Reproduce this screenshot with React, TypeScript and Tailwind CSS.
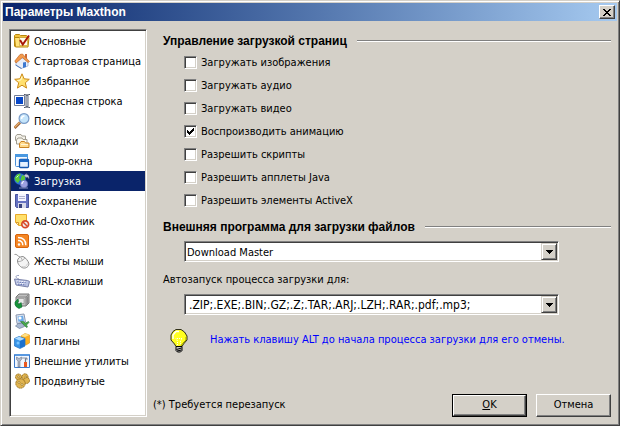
import { useState } from "react";
import type { ReactNode } from "react";

const Icon = ({ children }: { children: ReactNode }) => (
  <svg viewBox="0 0 16 16" className="h-4 w-4 shrink-0" aria-hidden="true">
    {children}
  </svg>
);

const sections: { name: string; icon: ReactNode }[] = [
  {
    name: "Основные",
    icon: (
      <Icon>
        <path d="M.5 13.5v-11l1-1h4l1 1h6l1 1V5" fill="#f3c23c" stroke="#b8860b" />
        <path d="M.5 4.500h14.5l-1 9.500H1.500z" fill="#ffe27a" stroke="#b8860b" />
        <path d="M5.5 4.500h8v8h-8z" fill="#fffbe8" stroke="#c8a030" strokeWidth=".7" />
        <path d="M6 7l2.800 4.500L15 2.500" fill="none" stroke="#a81808" strokeWidth="2" />
      </Icon>
    ),
  },
  {
    name: "Стартовая страница",
    icon: (
      <Icon>
        <path d="M2 8l4-4 8 4v5l-7 2.5L2 12z" fill="#e9eef8" stroke="#8fa5cc" strokeWidth=".7" />
        <path d="M11 1h2v5h-2z" fill="#c86838" />
        <path d="M.8 8L6 1.500 8.500 1 15.500 8.500l-1.500 1L8.500 4.500 2 10z" fill="#f49a4c" stroke="#c06a28" strokeWidth=".7" />
        <path d="M9 9.500l3-.5v5l-3 1z" fill="#3c78d0" />
        <path d="M1.500 12l6 3.500" stroke="#5078b8" />
      </Icon>
    ),
  },
  {
    name: "Избранное",
    icon: (
      <Icon>
        <path d="M8 .8l2.100 5 5.200.5-4 3.500 1.300 5.300L8 12.200l-4.600 2.900 1.300-5.300-4-3.500 5.200-.5z" fill="#ffe070" stroke="#cc8a18" />
        <path d="M8 3.500L6.800 7l-3.300.5" stroke="#fffbd8" fill="none" />
      </Icon>
    ),
  },
  {
    name: "Адресная строка",
    icon: (
      <Icon>
        <path d="M.5 2.500h10v10H.5z" fill="#fff" stroke="#707c98" />
        <path d="M2 4h7v7H2z" fill="#0848c8" />
        <path d="M12 2h2v12h-2z" fill="#dce2ee" stroke="#606878" />
        <path d="M10 1.500h1.500l1.500 1 1.500-1H16M10 14.500h1.500l1.500-1 1.500 1H16" fill="none" stroke="#505868" />
      </Icon>
    ),
  },
  {
    name: "Поиск",
    icon: (
      <Icon>
        <path d="M.5 15L6 9.500" stroke="#9c6030" strokeWidth="2.800" />
        <path d="M.5 14.500l5-5" stroke="#e8b070" strokeWidth="1.200" />
        <circle cx="10" cy="5.500" r="4.900" fill="#c5e5fb" stroke="#7a9cc8" strokeWidth="1.200" />
        <path d="M7.500 6c0-2 1.500-3 3-3" stroke="#fff" strokeWidth="1.500" fill="none" />
      </Icon>
    ),
  },
  {
    name: "Вкладки",
    icon: (
      <Icon>
        <path d="M1.500 7.500v-4l1.500-2h4l1 1.500h3.500v4.500z" fill="#f2f0e8" stroke="#a09c90" />
        <path d="M2.500 11V7l1.500-2h4l1 1.500h4V11z" fill="#faf8ef" stroke="#a09c90" />
        <path d="M5.500 14.500v-4l1.500-2h3.500l1 1.500H15v4.500z" fill="#ffd98a" stroke="#c78224" />
        <path d="M7 11.500h7" stroke="#fff5d8" />
      </Icon>
    ),
  },
  {
    name: "Popup-окна",
    icon: (
      <Icon>
        <rect x="1.500" y="1.500" width="12" height="12" rx="1" fill="#f4f9ff" stroke="#4a90d8" />
        <path d="M1 1h13v3H1z" fill="#4a98e0" />
        <rect x="5.500" y="6.500" width="9" height="8" rx="1" fill="#e4f1ff" stroke="#1458b0" strokeWidth="1.300" />
        <path d="M5.500 6h9v3h-9z" fill="#1c68c4" />
      </Icon>
    ),
  },
  {
    name: "Загрузка",
    icon: (
      <Icon>
        <circle cx="6" cy="6" r="5.800" fill="#2c70d8" />
        <path d="M.5 5L3 1.500 6 .5 7 2 5 4l1 3-2 3-2.500-2zM8 2l3 1v4L8 9 6.500 6.500z" fill="#58c838" />
        <path d="M2.500 4.500l2-2" stroke="#d8ffd0" />
        <circle cx="10" cy="11" r="3.800" fill="#9ca0e0" stroke="#5868b0" strokeWidth=".6" />
        <path d="M8 11c0-1.500 1-2.500 2-2.500" stroke="#f0f2ff" strokeWidth="1.200" fill="none" />
        <path d="M10 2.500L12.500.5v1c2 0 3 1.500 2.500 4.500-.5-1.500-1.500-2-2.500-2v1z" fill="#c8cce0" stroke="#606880" strokeWidth=".4" />
        <path d="M5 15h9" stroke="#8890c0" />
      </Icon>
    ),
  },
  {
    name: "Сохранение",
    icon: (
      <Icon>
        <path d="M1.500 1.500h13v13h-12l-1-1z" fill="#6672c0" stroke="#48549c" />
        <path d="M4 1h8v7H4z" fill="#f4f5ff" />
        <path d="M5 3.500h6M5 5.500h6" stroke="#b0b4d0" />
        <path d="M4 10h8v5H4z" fill="#d8dae8" />
        <path d="M5 11h3v4H5z" fill="#38427c" />
      </Icon>
    ),
  },
  {
    name: "Ad-Охотник",
    icon: (
      <Icon>
        <path d="M1.500 1.500h11v11h-8l-3-3z" fill="#ffe06a" stroke="#e8a828" />
        <path d="M2 9.500h2.500V12" fill="#fff5c0" stroke="#d89828" />
        <circle cx="11.200" cy="11.200" r="3.400" fill="#eee" stroke="#d84828" strokeWidth="1.700" />
        <path d="M9 9l4.500 4.500" stroke="#d84828" strokeWidth="1.500" />
      </Icon>
    ),
  },
  {
    name: "RSS-ленты",
    icon: (
      <Icon>
        <rect x="1.500" y="1.500" width="13" height="13" rx="1.500" fill="#f48624" stroke="#d8640c" />
        <circle cx="5" cy="11.500" r="1.200" fill="#fff" />
        <path d="M4 7.500c3 0 4.800 2 4.800 4.800M4 4.500c5 0 7.800 3 7.800 7.800" fill="none" stroke="#fff" strokeWidth="1.400" />
      </Icon>
    ),
  },
  {
    name: "Жесты мыши",
    icon: (
      <Icon>
        <path d="M.5 1.500C3 .5 3 3 6 4" fill="none" stroke="#999" />
        <path d="M3.500 8c0-3 4-5.500 6.500-4 1.500 1 4.500 4 4.800 6.500.3 3-2.800 5-5.300 4.500-3-.5-6-4-6-7z" fill="#f4f4f4" stroke="#8c8c8c" />
        <path d="M4 8.500c2.500.5 6-1.500 7-4M7 4.500l1.500 3" fill="none" stroke="#a0a0a0" strokeWidth=".8" />
        <path d="M8 13.500c2.500 1 5-.5 5.500-3" stroke="#d0d0d0" fill="none" />
      </Icon>
    ),
  },
  {
    name: "URL-клавиши",
    icon: (
      <Icon>
        <path d="M5 6C1 5 1 2 5 2.500" fill="none" stroke="#98a0c0" />
        <path d="M.5 6l13 1.500 2 1-1.500 5.500L2 12z" fill="#b8c2e4" stroke="#7880a8" />
        <path d="M2.500 8l10 1M3 10l10 1" stroke="#fff" strokeDasharray="1.5 1" />
        <path d="M3 9l10 1M4 11.200l8 .8" stroke="#5060a0" strokeWidth=".8" strokeDasharray="1.5 1" />
      </Icon>
    ),
  },
  {
    name: "Прокси",
    icon: (
      <Icon>
        <path d="M2 4l3-3h10v9l-3 3H2z" fill="#c0c0c0" stroke="#777" />
        <path d="M2 4h10v9M12 4l3-3" fill="none" stroke="#888" />
        <path d="M4 5.500h6v5H4z" fill="#e8e8e8" stroke="#888" strokeWidth=".6" />
        <path d="M12.500 4.500l2-2V10l-2 2z" fill="#888" />
        <path d="M5 15.500L2.500 14 1 11.500V9l3-3 .5 2.500C3 10 3.500 11 5.500 11L7 9.500l1 4.500z" fill="#18943a" stroke="#08682c" strokeWidth=".6" />
      </Icon>
    ),
  },
  {
    name: "Скины",
    icon: (
      <Icon>
        <path d="M2 2l8-1 1.500 8L3 10.500z" fill="#dce4f0" stroke="#8c98b0" />
        <path d="M3.500 3.500l5.500-.7 1 5-5.500 1z" fill="#6cabe8" />
        <circle cx="6" cy="5" r="1.600" fill="#fff" />
        <path d="M1.500 13l3-2.500h4l2 3-5 2z" fill="#a8b8d0" stroke="#6c7c98" strokeWidth=".7" />
        <path d="M6.500 8.500h3l2 1.500 3-1.500.5 1-2.500 2.500 1 2-1 .5L9 11z" fill="#48a848" stroke="#24703c" strokeWidth=".6" />
      </Icon>
    ),
  },
  {
    name: "Плагины",
    icon: (
      <Icon>
        <path d="M7 3l4-2.500L15.500 2v8L12 12 7 9z" fill="#ffb020" stroke="#d89018" strokeWidth=".6" />
        <path d="M7 3l4-2.500L15.500 2 11 4z" fill="#ffe084" />
        <path d="M.5 5.500L5 3.500l6 2V13l-5 2.500L.5 13z" fill="#3894e8" stroke="#2070c0" strokeWidth=".7" />
        <path d="M.8 5.500L5 3.700l5.500 2-4.500 2z" fill="#b0ddff" />
        <path d="M6 8v7l5-2V6z" fill="#1c70cc" />
        <circle cx="4" cy="10" r="1.500" fill="#78c4ff" />
      </Icon>
    ),
  },
  {
    name: "Внешние утилиты",
    icon: (
      <Icon>
        <path d="M.5 1.500h15v13H.5z" fill="#f0f6ff" stroke="#3c78c8" />
        <path d="M1 1h14v2H1z" fill="#5898e0" />
        <path d="M2.500 4v2.500L4 8v6h2V8l1.500-1.500V4L5 5.500z" fill="#b0b8c8" stroke="#606878" strokeWidth=".5" />
        <path d="M8 4.500h5l1 2h-2l-1-1H8z" fill="#8890a0" />
        <path d="M10 9h3v5h-3z" fill="#ec5820" />
        <path d="M11.500 5.500V9" stroke="#707888" strokeWidth="1.200" />
      </Icon>
    ),
  },
  {
    name: "Продвинутые",
    icon: (
      <Icon>
        <g fill="#e0b450" stroke="#98701c" strokeWidth=".9">
          <circle cx="4.500" cy="4" r="3" strokeDasharray="2 .5" />
          <circle cx="11" cy="3.800" r="3" strokeDasharray="2 .5" />
          <circle cx="12.500" cy="7.500" r="3" strokeDasharray="2 .5" />
          <circle cx="6.500" cy="10.500" r="4.700" strokeDasharray="2 .5" />
        </g>
        <g fill="#fff0b8" stroke="#8c6418" strokeWidth=".6">
          <circle cx="4.500" cy="3.800" r=".9" />
          <circle cx="11.800" cy="4" r=".9" />
          <circle cx="5" cy="9.500" r="1" />
          <circle cx="8" cy="11.500" r="1" />
        </g>
      </Icon>
    ),
  },
];

const pageOptions = [
  { label: "Загружать изображения", on: false },
  { label: "Загружать аудио", on: false },
  { label: "Загружать видео", on: false },
  { label: "Воспроизводить анимацию", on: true },
  { label: "Разрешить скрипты", on: false },
  { label: "Разрешить апплеты Java", on: false },
  { label: "Разрешить элементы ActiveX", on: false },
];

const Heading = ({ children }: { children: ReactNode }) => (
  <h2 className="flex h-5 items-center gap-[10px] font-['Liberation_Sans',sans-serif] text-[12px] font-bold">
    {children}
    <span className="h-[2px] flex-1 border-t border-[#808080] bg-white" />
  </h2>
);

const Arrow = () => (
  <svg viewBox="0 0 7 4" className="h-1 w-[7px]" shapeRendering="crispEdges" aria-hidden="true">
    <path d="M0 0h7v1H6v1H5v1H4v1H3V3H2V2H1V1H0z" />
  </svg>
);

const arrowBox =
  "flex w-4 shrink-0 items-center justify-center border border-t-[#d4d0c8] border-l-[#d4d0c8] border-r-[#404040] border-b-[#404040] bg-[#d4d0c8] shadow-[inset_1px_1px_0_#fff,inset_-1px_-1px_0_#808080]";
const sunken =
  "border border-t-[#808080] border-l-[#808080] border-r-white border-b-white bg-white shadow-[inset_1px_1px_0_#404040,inset_-1px_-1px_0_#d4d0c8]";
const raised =
  "border border-t-white border-l-white border-r-[#404040] border-b-[#404040] bg-[#d4d0c8] shadow-[inset_-1px_-1px_0_#808080]";

const App = () => {
  const [selected, setSelected] = useState("Загрузка");
  const [options, setOptions] = useState(pageOptions);
  const [fileTypes, setFileTypes] = useState(
    ".ZIP;.EXE;.BIN;.GZ;.Z;.TAR;.ARJ;.LZH;.RAR;.pdf;.mp3;"
  );

  const toggle = (label: string) =>
    setOptions(options.map((o) => (o.label === label ? { ...o, on: !o.on } : o)));

  return (
    <div className="flex min-h-screen flex-col border border-t-[#d4d0c8] border-l-[#d4d0c8] border-r-[#404040] border-b-[#404040] bg-[#d4d0c8] p-[2px] font-['DejaVu_Sans_Condensed','DejaVu_Sans',sans-serif] text-[11px] text-black shadow-[inset_1px_1px_0_#fff,inset_-1px_-1px_0_#808080]">
      <header className="flex h-[18px] items-center justify-between bg-linear-to-r from-[#0a246a] to-[#a6caf0] px-[2px]">
        <h1 className="font-['Liberation_Sans',sans-serif] text-[12px] font-bold text-white">
          Параметры Maxthon
        </h1>
        <button type="button" aria-label="Закрыть" className={`flex h-[14px] w-4 items-center justify-center ${raised}`}>
          <svg viewBox="0 0 8 7" className="h-[7px] w-2" shapeRendering="crispEdges" aria-hidden="true">
            <path d="M0 0h2v1h1v1h2V1h1V0h2v1H7v1H6v1H5v1h1v1h1v1h1v1H6V6H5V5H3v1H2v1H0V6h1V5h1V4h1V3H2V2H1V1H0z" />
          </svg>
        </button>
      </header>

      <div className="flex flex-1 gap-[6px] px-[6px] pt-2 pb-[6px]">
        <nav className={`w-[138px] shrink-0 p-px ${sunken}`}>
          {sections.map((s) => (
            <button
              key={s.name}
              type="button"
              onClick={() => setSelected(s.name)}
              className={`flex h-5 w-full items-center gap-1 pl-[3px] text-left whitespace-nowrap ${
                s.name === selected ? "bg-[#0a246a] text-white" : ""
              }`}
            >
              {s.icon}
              <span className="pt-[2px]">{s.name}</span>
            </button>
          ))}
        </nav>

        <main className="flex min-w-0 flex-1 flex-col">
          <div className="pt-[2px] pl-[10px]">
            <Heading>Управление загрузкой страниц</Heading>
            <div className="pl-[21px]">
              {options.map((o) => (
                <label key={o.label} className="flex h-[23px] items-center gap-1">
                  <span className="relative flex">
                    <input
                      type="checkbox"
                      checked={o.on}
                      onChange={() => toggle(o.label)}
                      className={`h-[13px] w-[13px] appearance-none ${sunken}`}
                    />
                    {o.on && (
                      <svg viewBox="0 0 13 13" className="pointer-events-none absolute inset-0" shapeRendering="crispEdges" aria-hidden="true">
                        <path d="M3 5h1v1h1v1h1V6h1V5h1V4h1V3h1v3H9v1H8v1H7v1H6v1H5V9H4V8H3z" />
                      </svg>
                    )}
                  </span>
                  <span className="pt-[2px]">{o.label}</span>
                </label>
              ))}
            </div>

            <div className="pt-[5px]">
              <Heading>Внешняя программа для загрузки файлов</Heading>
            </div>
            <div className="mt-1 mr-[52px] ml-[21px]">
              <div className={`flex h-[21px] p-px ${sunken}`}>
                <select aria-label="Внешняя программа" className="min-w-0 flex-1 appearance-none pt-[2px] pl-px outline-none">
                  <option>Download Master</option>
                </select>
                <span className={arrowBox}>
                  <Arrow />
                </span>
              </div>
            </div>
            <label htmlFor="file-types" className="mt-2 block leading-5">
              Автозапуск процесса загрузки для:
            </label>
            <div className="mt-1 mr-[52px] ml-[21px]">
              <div className={`flex h-[21px] p-px ${sunken}`}>
                <input
                  id="file-types"
                  type="text"
                  value={fileTypes}
                  onChange={(e) => setFileTypes(e.target.value)}
                  className="min-w-0 flex-1 pl-[3px] text-[12px] outline-none"
                />
                <button type="button" aria-label="Показать список" className={arrowBox}>
                  <Arrow />
                </button>
              </div>
            </div>

            <div className="mt-[14px] flex items-start gap-[22px] pl-[7px]">
              <svg viewBox="0 0 18 24" className="h-6 w-[18px] shrink-0" aria-hidden="true">
                <path d="M6 .5h5L14.500 3 17 7v4l-3.500 4-1.500 2.500H6L4.500 15 1 11V6l2-3.500z" fill="#ffff20" stroke="#000" strokeWidth=".8" />
                <path d="M3 10V6l3-3.500h3" fill="none" stroke="#fff" strokeWidth="1.500" />
                <path d="M16 8v3l-3.500 3.500L11 17" fill="none" stroke="#a0a000" />
                <path d="M7.500 16v-4L6 9.500h6L10.500 12v4" fill="none" stroke="#fff" strokeDasharray="1 1" />
                <path d="M6 17.500h6v4L10.500 23h-3L6 21.500z" fill="#c0c0c0" stroke="#000" />
                <path d="M6.500 20.500l5-1.500M7 22l4.500-1" stroke="#000" />
              </svg>
              <p className="leading-[22px] whitespace-nowrap text-[#0000ff]">
                Нажать клавишу ALT до начала процесса загрузки для его отмены.
              </p>
            </div>
          </div>

          <footer className="mt-auto flex items-center gap-[9px]">
            <p className="mr-auto">(*) Требуется перезапуск</p>
            <div className="border border-black">
              <button type="button" className={`block h-[21px] w-[73px] ${raised}`}>
                <span className="underline">O</span>K
              </button>
            </div>
            <button type="button" className={`h-[23px] w-[75px] ${raised}`}>
              Отмена
            </button>
          </footer>
        </main>
      </div>
    </div>
  );
};

export default App;
